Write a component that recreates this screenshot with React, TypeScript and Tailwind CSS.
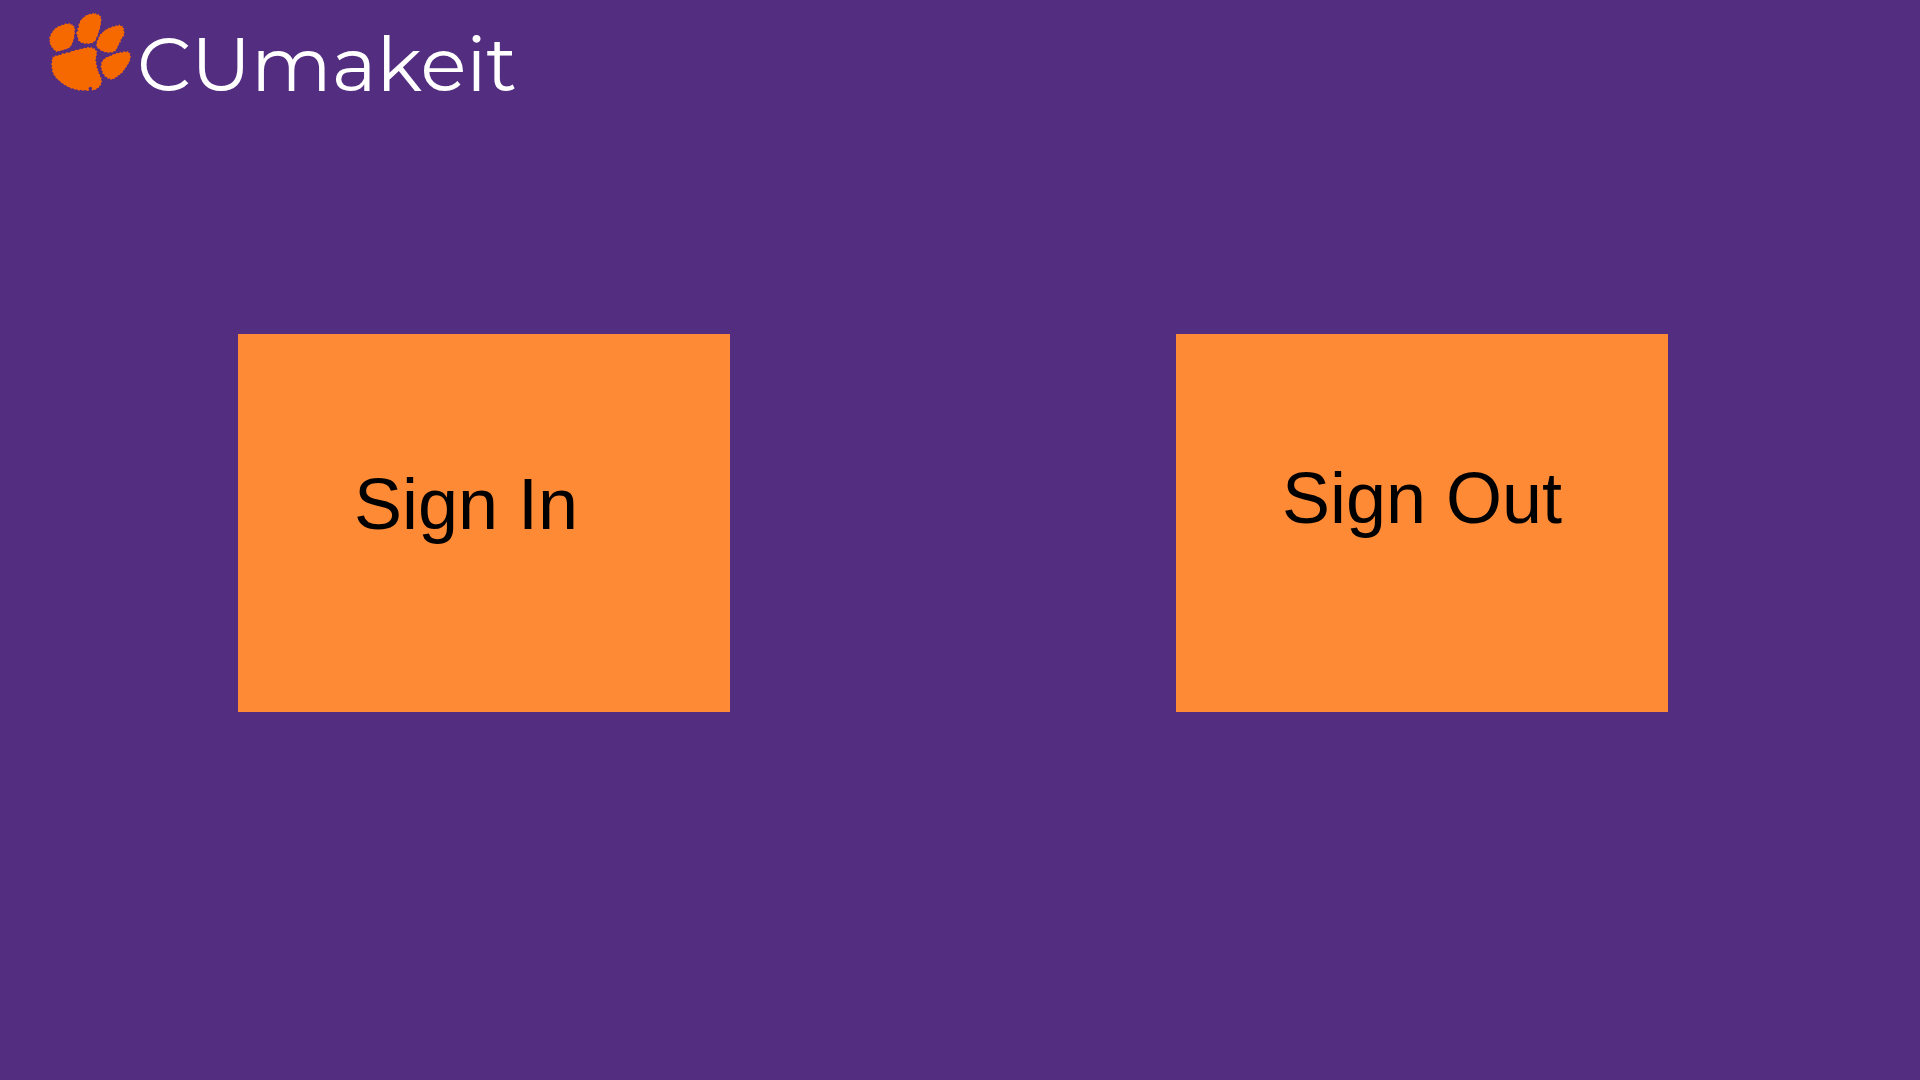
function Paw() {
  return (
    <svg viewBox="0 0 291 300" className="h-[100px] w-[97px] shrink-0" fill="#f66900" aria-hidden="true">
      <path d="M28 124L30 118L27 113L32 108L32 101L37 98L38 92L43 90L45 85L51 83L54 79L62 78L65 74L71 75L77 70L82 73L89 69L92 74L97 73L98 77L104 78L101 83L106 87L103 94L105 101L102 106L103 113L100 119L99 126L96 130L95 136L91 139L88 144L83 145L80 148L74 148L70 151L64 151L60 154L53 153L49 157L46 151L40 150L40 144L34 142L34 136L29 133L31 128Z" />
      <path d="M110 96L115 92L111 86L117 82L115 74L120 68L120 62L126 58L128 53L134 51L137 46L144 45L149 41L155 43L161 38L163 43L168 38L170 45L177 42L178 48L184 49L181 54L185 60L182 66L183 73L180 79L180 86L177 91L176 98L173 102L174 108L169 112L168 119L165 124L160 125L158 130L151 129L146 132L140 130L134 132L130 128L123 129L120 124L114 122L115 114L111 110L113 104L108 101Z" />
      <path d="M168 136L171 130L170 123L175 119L175 112L180 109L179 103L185 101L188 96L193 94L195 89L202 88L206 83L213 83L217 79L223 80L228 76L234 78L239 73L242 79L249 77L247 83L253 85L250 91L254 97L251 102L253 108L247 110L246 116L241 119L243 126L237 128L237 134L233 138L232 145L228 148L227 154L221 154L217 158L211 156L205 159L200 156L193 157L189 153L182 152L179 147L172 145L172 140Z" />
      <path d="M181 200L185 195L183 188L188 184L190 178L195 176L199 171L205 171L209 167L215 167L219 162L226 163L230 158L236 160L241 156L247 158L252 153L257 157L264 153L266 159L272 160L269 165L273 171L269 176L271 182L266 186L266 192L261 195L260 201L255 204L254 209L249 212L248 218L242 220L240 225L234 226L232 231L226 232L223 237L217 236L213 240L209 235L203 237L201 231L194 230L193 223L187 221L188 214L184 211L185 205Z" />
      <path d="M35 180L39 175L36 170L43 171L46 166L52 168L57 164L63 165L67 160L75 161L80 157L88 158L94 153L102 153L107 149L115 150L120 146L127 147L132 143L139 145L144 140L149 144L156 141L158 146L165 145L165 151L172 153L169 159L171 165L167 170L169 176L165 181L170 186L167 192L172 197L169 203L175 207L172 212L178 216L174 220L180 223L180 230L185 233L183 240L187 245L182 249L184 255L178 257L177 263L171 264L168 269L161 269L157 272L155 268L157 263L151 260L145 264L148 271L142 273L136 270L129 272L122 269L116 272L110 268L104 269L99 265L93 266L88 261L82 260L78 256L72 255L69 250L63 249L61 244L55 241L52 236L47 234L46 228L40 225L41 219L36 215L38 208L34 203L37 198L33 193L37 187Z" />
    </svg>
  );
}

const actions = [
  { label: "Sign In", spacing: "pt-32 pr-9" },
  { label: "Sign Out", spacing: "pt-[122px]" },
];

export default function App() {
  return (
    <div className="min-h-screen bg-[#522d80] font-['Liberation_Sans',Arial,sans-serif]">
      <header className="flex h-[100px] items-start pl-10">
        <Paw />
        <h1 className="pt-4 font-['Montserrat','Inter',sans-serif] text-[76px] leading-[96px] font-normal text-white">
          CUmakeit
        </h1>
      </header>
      <main className="flex flex-wrap justify-between gap-10 pt-[234px] pr-[252px] pl-[238px]">
        {actions.map(({ label, spacing }) => (
          <button
            key={label}
            type="button"
            className={`flex h-[378px] w-[492px] cursor-pointer items-start justify-center bg-[#ff8a35] text-[72px] leading-[84px] text-black ${spacing}`}
          >
            {label}
          </button>
        ))}
      </main>
    </div>
  );
}
